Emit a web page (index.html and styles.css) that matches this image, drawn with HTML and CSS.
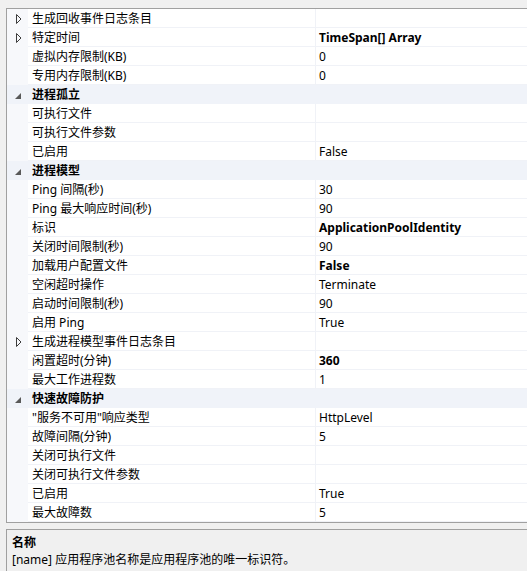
FILE: index.html
```html
<!DOCTYPE html>
<html>
<head>
<meta charset="utf-8">
<link rel="stylesheet" href="styles.css">
</head>
<body>
<div class="grid">
  <div class="row"><div class="gut"><svg class="ico" width="21" height="18" viewBox="0 0 21 18"><path d="M9.5 5.5 L9.5 14.5 L14 10 Z" fill="none" stroke="#3c3c3c" stroke-width="1"/></svg></div><div class="name">生成回收事件日志条目</div><div class="val"></div></div>
  <div class="row"><div class="gut"><svg class="ico" width="21" height="18" viewBox="0 0 21 18"><path d="M9.5 5.5 L9.5 14.5 L14 10 Z" fill="none" stroke="#3c3c3c" stroke-width="1"/></svg></div><div class="name">特定时间</div><div class="val b">TimeSpan[] Array</div></div>
  <div class="row"><div class="gut"></div><div class="name">虚拟内存限制(KB)</div><div class="val">0</div></div>
  <div class="row"><div class="gut"></div><div class="name">专用内存限制(KB)</div><div class="val">0</div></div>
  <div class="row cat"><div class="gut"><svg class="ico" width="21" height="18" viewBox="0 0 21 18"><path d="M14 8 L14 14 L8 14 Z" fill="#595959"/></svg></div><div class="name">进程孤立</div><div class="val"></div></div>
  <div class="row"><div class="gut"></div><div class="name">可执行文件</div><div class="val"></div></div>
  <div class="row"><div class="gut"></div><div class="name">可执行文件参数</div><div class="val"></div></div>
  <div class="row"><div class="gut"></div><div class="name">已启用</div><div class="val">False</div></div>
  <div class="row cat"><div class="gut"><svg class="ico" width="21" height="18" viewBox="0 0 21 18"><path d="M14 8 L14 14 L8 14 Z" fill="#595959"/></svg></div><div class="name">进程模型</div><div class="val"></div></div>
  <div class="row"><div class="gut"></div><div class="name">Ping 间隔(秒)</div><div class="val">30</div></div>
  <div class="row"><div class="gut"></div><div class="name">Ping 最大响应时间(秒)</div><div class="val">90</div></div>
  <div class="row"><div class="gut"></div><div class="name">标识</div><div class="val b">ApplicationPoolIdentity</div></div>
  <div class="row"><div class="gut"></div><div class="name">关闭时间限制(秒)</div><div class="val">90</div></div>
  <div class="row"><div class="gut"></div><div class="name">加载用户配置文件</div><div class="val b">False</div></div>
  <div class="row"><div class="gut"></div><div class="name">空闲超时操作</div><div class="val">Terminate</div></div>
  <div class="row"><div class="gut"></div><div class="name">启动时间限制(秒)</div><div class="val">90</div></div>
  <div class="row"><div class="gut"></div><div class="name">启用 Ping</div><div class="val">True</div></div>
  <div class="row"><div class="gut"><svg class="ico" width="21" height="18" viewBox="0 0 21 18"><path d="M9.5 5.5 L9.5 14.5 L14 10 Z" fill="none" stroke="#3c3c3c" stroke-width="1"/></svg></div><div class="name">生成进程模型事件日志条目</div><div class="val"></div></div>
  <div class="row"><div class="gut"></div><div class="name">闲置超时(分钟)</div><div class="val b">360</div></div>
  <div class="row"><div class="gut"></div><div class="name">最大工作进程数</div><div class="val">1</div></div>
  <div class="row cat"><div class="gut"><svg class="ico" width="21" height="18" viewBox="0 0 21 18"><path d="M14 8 L14 14 L8 14 Z" fill="#595959"/></svg></div><div class="name">快速故障防护</div><div class="val"></div></div>
  <div class="row"><div class="gut"></div><div class="name">"服务不可用"响应类型</div><div class="val">HttpLevel</div></div>
  <div class="row"><div class="gut"></div><div class="name">故障间隔(分钟)</div><div class="val">5</div></div>
  <div class="row"><div class="gut"></div><div class="name">关闭可执行文件</div><div class="val"></div></div>
  <div class="row"><div class="gut"></div><div class="name">关闭可执行文件参数</div><div class="val"></div></div>
  <div class="row"><div class="gut"></div><div class="name">已启用</div><div class="val">True</div></div>
  <div class="row"><div class="gut"></div><div class="name">最大故障数</div><div class="val">5</div></div>
</div>
<div class="desc">
  <div class="desc-title">名称</div>
  <div class="desc-text">[name] 应用程序池名称是应用程序池的唯一标识符。</div>
</div>
</body>
</html>
```

FILE: styles.css
```css
html, body {
  margin: 0;
  padding: 0;
  background: #f0f0f0;
  font-family: "Noto Sans", "Noto Sans CJK SC", sans-serif;
  font-size: 12px;
  color: #000;
}
.grid {
  margin: 8px 0 0 6px;
  border-top: 1px solid #a0a0a0;
  border-left: 1px solid #a0a0a0;
  border-bottom: 1px solid #a0a0a0;
  background: #fff;
}
.row {
  display: grid;
  grid-template-columns: 21px 288px 1fr;
  height: 19px;
}
.gut {
  background: #f7f8fb;
}
.ico {
  display: block;
}
.name, .val {
  border-bottom: 1px solid #f0f2f7;
  padding-top: 2px;
  line-height: 16px;
  height: 16px;
  white-space: nowrap;
  overflow: hidden;
}
.name {
  padding-left: 4px;
  border-right: 1px solid #f0f2f7;
}
.val {
  padding-left: 3px;
}
.b { font-weight: bold; }
.cat .name, .cat .val {
  background: #f0f3f9;
  border-bottom-color: #f0f3f9;
  border-right-color: #f0f3f9;
  font-weight: bold;
}
.cat .gut { background: #f0f3f9; }
.desc {
  margin: 6px 0 0 6px;
  border-top: 1px solid #a0a0a0;
  border-left: 1px solid #a0a0a0;
  padding: 5px 5px 0;
  height: 60px;
  background: #f0f0f0;
}
.desc-title {
  font-weight: bold;
  line-height: 16px;
}
.desc-text {
  line-height: 17px;
}
```
